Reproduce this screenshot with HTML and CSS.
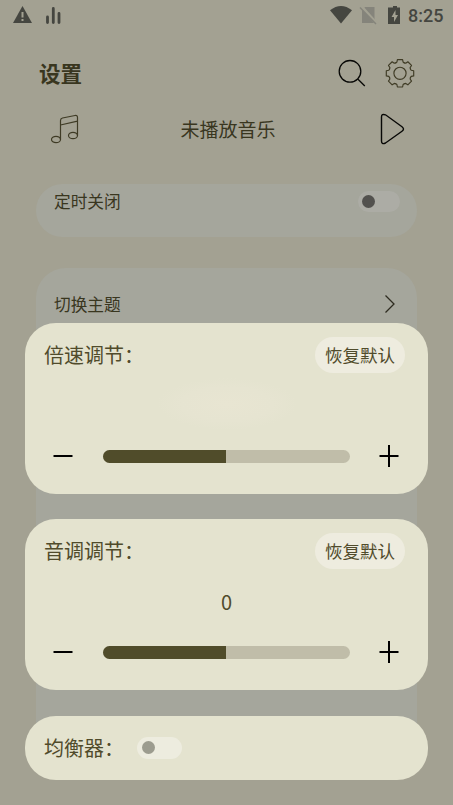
FILE: index.html
```html
<!DOCTYPE html>
<html lang="zh-CN">
<head>
<meta charset="utf-8">
<title>设置</title>
<link rel="stylesheet" href="styles.css">
</head>
<body>
<main class="page">
  <div class="status">
    <svg width="60" height="24" viewBox="0 0 60 24"><path fill="#454640" d="M9.500 3 19 20H0Z"/><path stroke="#a3a192" stroke-width="2" d="M9.500 9v5.500M9.500 16v2"/><path stroke="#454640" stroke-width="2.800" stroke-linecap="round" d="M34.500 14v5.500M40.300 5.500v14M46 10.500v9"/></svg>
    <svg class="signals" width="74" height="24" viewBox="0 0 74 24"><path fill="#454640" d="M0 6.500Q11-2 22 6.500L11 19.800Z" transform="translate(0 .7)"/><path fill="#85847b" d="M35 4h9.500v16H32V7Z"/><path stroke="#a3a192" stroke-width="3" d="m31 3 16 18"/><path stroke="#85847b" stroke-width="1.400" d="m30 4.500 16 16.500"/><path fill="#454640" d="M60 4.500h3V3h4v1.500h3v16.500H58V4.500Z"/><path fill="#a3a192" d="m65.500 7-4 7H64v5l4-7h-2.500Z"/></svg>
    <span class="clock">8:25</span>
  </div>
  <header class="header">
    <h1>设置</h1>
    <svg class="search" width="30" height="30" viewBox="0 0 30 30"><g fill="none" stroke="#080806" stroke-width="1.300"><circle cx="13" cy="13.300" r="10.800"/><path d="m21 21.200 6.800 6.800"/></g></svg>
    <svg class="gear" width="30" height="30" viewBox="-15 -15.300 30 30">
      <defs><path id="tooth" d="M-4.300-10.400-3.100-11.200-2.600-13.700H2.600L3.100-11.200 4.300-10.400"/></defs>
      <g fill="none" stroke="#3f3b25" stroke-width="1.150" stroke-linejoin="round" stroke-linecap="round">
        <use href="#tooth"/><use href="#tooth" transform="rotate(45)"/><use href="#tooth" transform="rotate(90)"/><use href="#tooth" transform="rotate(135)"/><use href="#tooth" transform="rotate(180)"/><use href="#tooth" transform="rotate(225)"/><use href="#tooth" transform="rotate(270)"/><use href="#tooth" transform="rotate(315)"/>
        <circle r="6.100"/>
      </g>
    </svg>
  </header>
  <section class="player">
    <svg width="28" height="30" viewBox="0 0 28 30"><g fill="none" stroke="#3f3b25" stroke-width="1.200"><ellipse cx="5" cy="25.500" rx="4.500" ry="3.200"/><ellipse cx="22" cy="21.500" rx="4.500" ry="3.200"/><path d="M9.500 25.500V6.500q0-2 2-2.500L24 1.500q2.500-.5 2.500 2v18M9.500 11l17-3.800"/></g></svg>
    <span>未播放音乐</span>
    <svg width="26" height="32" viewBox="0 0 26 32"><path fill="none" stroke="#080806" stroke-width="1.400" d="M2.500 4q0-3.500 4-2.200L23 13.700q3 2.300 0 4.500L6.500 30q-4 1.800-4-2Z"/></svg>
  </section>
  <section class="panel timer"><span>定时关闭</span><i class="switch dim"></i></section>
  <section class="panel theme"><span>切换主题</span><svg width="12" height="20" viewBox="0 0 12 20"><path fill="none" stroke="#2e2c20" stroke-width="1.300" d="m1.500 1.500 8.500 8.500-8.500 8.500"/></svg></section>
</main>
<div class="sheet">
  <section class="card">
    <div class="row"><span class="label">倍速调节：</span><button>恢复默认</button></div>
    <div class="value glow"></div>
    <div class="control">
      <svg width="20" height="22" viewBox="0 0 20 22"><path stroke="#000" stroke-width="2" d="M.5 11h19"/></svg>
      <div class="track"><div class="fill"></div></div>
      <svg width="20" height="22" viewBox="0 0 20 22"><path stroke="#000" stroke-width="2" d="M.5 11h19M10 0v22"/></svg>
    </div>
  </section>
  <section class="card">
    <div class="row"><span class="label">音调调节：</span><button>恢复默认</button></div>
    <div class="value">0</div>
    <div class="control">
      <svg width="20" height="22" viewBox="0 0 20 22"><path stroke="#000" stroke-width="2" d="M.5 11h19"/></svg>
      <div class="track"><div class="fill"></div></div>
      <svg width="20" height="22" viewBox="0 0 20 22"><path stroke="#000" stroke-width="2" d="M.5 11h19M10 0v22"/></svg>
    </div>
  </section>
  <section class="card equalizer"><span class="label">均衡器：</span><i class="switch"></i></section>
</div>
</body>
</html>
```
FILE: styles.css
```css
* { box-sizing: border-box; }
body {
  margin: 0;
  height: 805px;
  overflow: hidden;
  position: relative;
  background: #a3a192;
  color: #39361f;
  font-family: "Noto Sans CJK SC", sans-serif;
}
svg { display: block; flex: none; }
.page { height: 805px; overflow: hidden; }
.status { display: flex; height: 32px; padding: 3px 9px 0 13px; }
.signals { margin-left: auto; }
.clock {
  width: 36px;
  margin-left: 4px;
  font: 500 18px/26px Roboto, sans-serif;
  color: #454640;
  white-space: nowrap;
}
.header { display: flex; align-items: center; height: 82px; padding: 0 38px 0 39px; }
h1 { margin: 0 auto 0 0; font-size: 21.500px; line-height: 30px; font-weight: 700; }
.search { margin-right: 18px; }
.player {
  display: flex;
  align-items: center;
  justify-content: space-between;
  height: 30px;
  padding: 0 48px 0 51px;
  font-size: 19px;
}
.player span { margin: -2px 2px 0 0; }
.panel {
  display: flex;
  justify-content: space-between;
  margin: 0 36px;
  padding: 0 18px;
  background: #a5a69c;
  font-size: 16.700px;
  line-height: 24px;
}
.timer { height: 53px; margin-top: 40px; padding-top: 5px; border-radius: 27px; }
.theme { height: 492px; margin-top: 31px; padding: 24px 21px 0 18px; border-radius: 30px; }
.theme svg { margin-top: 2px; }
.switch {
  display: block;
  width: 45px;
  height: 22px;
  padding: 4.500px;
  border-radius: 11px;
  background: #edecdf;
}
.switch::before {
  content: "";
  display: block;
  width: 13px;
  height: 13px;
  border-radius: 50%;
  background: #9c9c8f;
}
.switch.dim { width: 42px; height: 21px; padding: 4px; background: #acaca5; margin: 2px -1px 0 0; }
.switch.dim::before { background: #52514e; }
.sheet {
  position: absolute;
  top: 323px;
  left: 25px;
  width: 403px;
  display: flex;
  flex-direction: column;
  gap: 25.500px;
}
.card {
  height: 171px;
  padding: 14px 23px 0 19px;
  border-radius: 31px;
  background: #e4e3cf;
  color: #504b2b;
}
.card + .card { margin-top: -.2px; }
.row { display: flex; align-items: center; justify-content: space-between; height: 36px; }
.label { font-size: 20px; line-height: 30px; }
button {
  width: 90px;
  height: 36px;
  padding: 0;
  border: 0;
  border-radius: 18px;
  background: #eeecdf;
  color: #504b2b;
  font: 17.500px/34px "Noto Sans CJK SC", sans-serif;
}
.value {
  width: 140px;
  height: 52px;
  margin: 5px 0 0 112.500px;
  text-align: center;
  font: 20px/56px "Noto Sans CJK SC", sans-serif;
}
.glow { background: radial-gradient(ellipse closest-side, #e8e5d2, #e6e4d1 65%, #e4e3cf); }
.control { display: flex; align-items: center; height: 22px; margin: 15px 5px 0 9px; }
.track {
  width: 247px;
  height: 13px;
  margin: 1px 29.500px 0;
  border-radius: 7px;
  overflow: hidden;
  background: #c0bda9;
}
.fill { width: 50%; height: 100%; background: #504c2a; }
.equalizer { display: flex; align-items: center; height: 64px; padding: 0 19px; }
.equalizer .switch { margin-left: 13px; }
```
